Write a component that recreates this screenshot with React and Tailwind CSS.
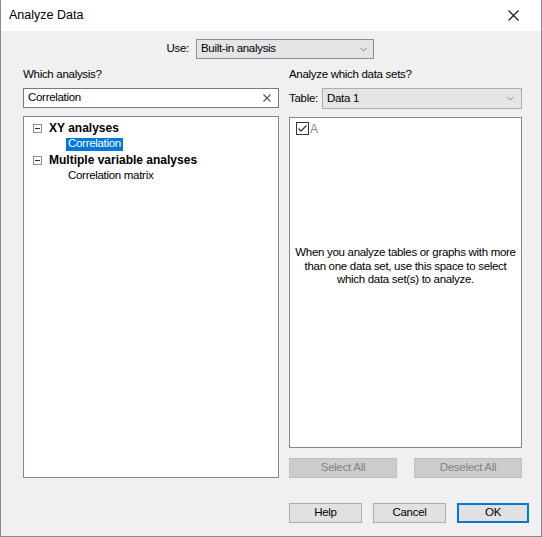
import { ChevronDown } from "lucide-react";

const font = { fontFamily: '"Liberation Sans", "Segoe UI", Arial, sans-serif' };

const MinusBox = () => (
  <span className="flex items-center justify-center w-[9px] h-[9px] border border-[#919191] bg-white">
    <span className="w-[5px] h-px bg-[#333]" />
  </span>
);

const Cross = ({ size, color, width }) => (
  <svg width={size} height={size} viewBox={`0 0 ${size} ${size}`}>
    <path d={`M0.5 0.5 L${size - 0.5} ${size - 0.5} M${size - 0.5} 0.5 L0.5 ${size - 0.5}`} stroke={color} strokeWidth={width} fill="none" />
  </svg>
);

const Button = ({ children, disabled, primary, className = "" }) => (
  <div
    className={`flex items-center justify-center h-[20px] ${
      disabled
        ? "bg-[#cccccc] border border-[#bfbfbf] text-[#838383]"
        : primary
        ? "bg-[#e1e1e1] border-2 border-[#0078d7] text-black"
        : "bg-[#e1e1e1] border border-[#adadad] text-black"
    } ${className}`}
  >
    {children}
  </div>
);

export default function App() {
  return (
    <div
      className="w-[542px] h-[537px] flex flex-col bg-[#f0f0f0] border-l border-r border-b border-[#8a8a8a] text-[11.5px] tracking-[-0.3px] text-black leading-none whitespace-nowrap"
      style={font}
    >
      {/* title bar */}
      <div className="h-[31px] bg-white flex items-center pl-[8px] pr-[22px] shrink-0">
        <span className="text-[12.5px] tracking-normal">Analyze Data</span>
        <span className="ml-auto flex">
          <Cross size={11} color="#111" width={1.1} />
        </span>
      </div>

      <div className="flex-1 flex flex-col">
        {/* Use row */}
        <div className="mt-[8px] h-[20px] flex items-center">
          <span className="w-[188px] text-right">Use:</span>
          <div className="ml-[7px] w-[178px] h-[20px] flex items-center pl-[4px] pr-[4px] bg-[#e5e5e5] border border-[#7f93ab]">
            <span>Built-in analysis</span>
            <ChevronDown className="ml-auto w-[11px] h-[11px] text-[#555]" strokeWidth={1.5} />
          </div>
        </div>

        {/* columns */}
        <div className="mt-[9px] flex pl-[22px]">
          {/* left */}
          <div className="w-[256px] flex flex-col">
            <div className="h-[14px] flex items-center">Which analysis?</div>
            <div className="mt-[6px] h-[20px] flex items-center pl-[4px] pr-[7px] bg-white border border-[#7a7a7a]">
              <span>Correlation</span>
              <span className="ml-auto flex">
                <Cross size={8} color="#555" width={1.1} />
              </span>
            </div>
            <div className="mt-[8px] h-[362px] bg-white border border-[#828790] pt-[3px] pl-[9px]">
              <div className="h-[16px] flex items-center">
                <MinusBox />
                <span className="ml-[7px] font-bold text-[12px] tracking-normal">XY analyses</span>
              </div>
              <div className="h-[16px] flex items-center pl-[33px]">
                <span className="bg-[#0078d7] text-white px-[2px] h-[13px] flex items-center">Correlation</span>
              </div>
              <div className="h-[16px] flex items-center">
                <MinusBox />
                <span className="ml-[7px] font-bold text-[12px] tracking-normal">Multiple variable analyses</span>
              </div>
              <div className="h-[16px] flex items-center pl-[35px]">Correlation matrix</div>
            </div>
          </div>

          {/* right */}
          <div className="ml-[10px] w-[233px] flex flex-col">
            <div className="h-[14px] flex items-center">Analyze which data sets?</div>
            <div className="mt-[6px] h-[21px] flex items-center">
              <span className="mr-[4px]">Table:</span>
              <div className="flex-1 h-[21px] flex items-center pl-[4px] pr-[5px] bg-[#e5e5e5] border border-[#adadad]">
                <span>Data 1</span>
                <ChevronDown className="ml-auto w-[11px] h-[11px] text-[#555]" strokeWidth={1.5} />
              </div>
            </div>
            <div className="mt-[8px] h-[331px] bg-white border border-[#828790] flex flex-col">
              <div className="mt-[4px] ml-[6px] flex items-center">
                <span className="w-[13px] h-[13px] border border-[#333] flex items-center justify-center">
                  <svg width="11" height="11" viewBox="0 0 11 11">
                    <path d="M1.5 5.5 L4 8 L9.5 2.5" fill="none" stroke="#333" strokeWidth="1.3" />
                  </svg>
                </span>
                <span className="ml-[1px] text-[12px] text-[#7c8cb8]">A</span>
              </div>
              <div className="mt-[111px] text-center leading-[13.5px]">
                When you analyze tables or graphs with more
                <br />
                than one data set, use this space to select
                <br />
                which data set(s) to analyze.
              </div>
            </div>
            <div className="mt-[10px] flex justify-between">
              <Button disabled className="w-[108px]">Select All</Button>
              <Button disabled className="w-[108px]">Deselect All</Button>
            </div>
          </div>
        </div>

        {/* bottom buttons */}
        <div className="mt-[25px] flex pl-[288px]">
          <Button className="w-[73px]">Help</Button>
          <Button className="ml-[11px] w-[73px]">Cancel</Button>
          <Button primary className="ml-[11px] w-[72px]">OK</Button>
        </div>
      </div>
    </div>
  );
}
